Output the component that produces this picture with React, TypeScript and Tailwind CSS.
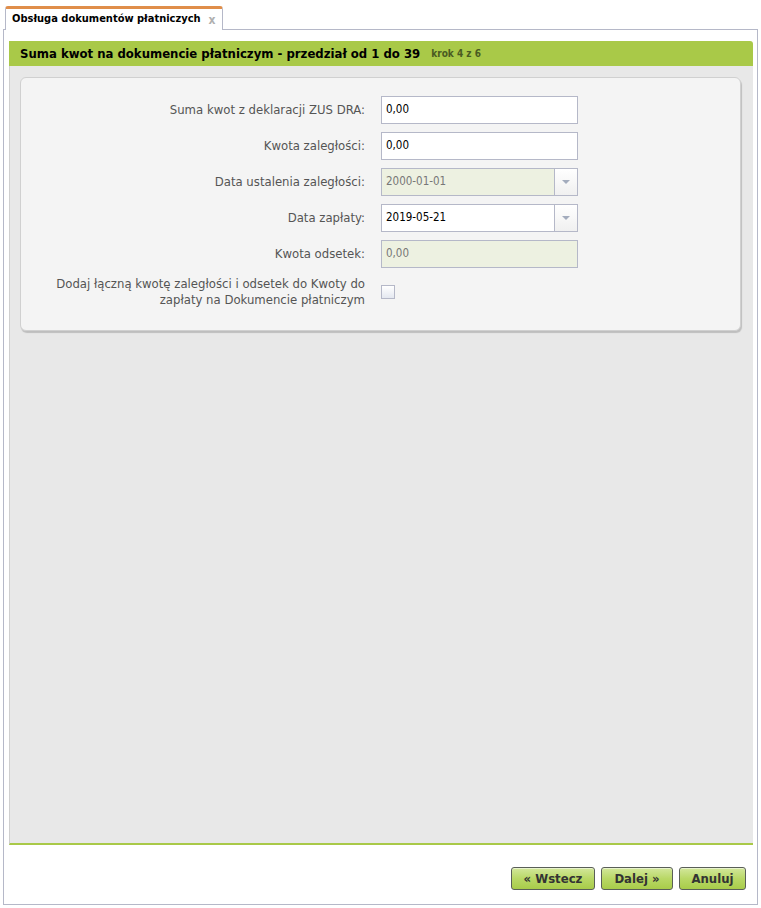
const font = { fontFamily: '"DejaVu Sans Condensed", "DejaVu Sans", sans-serif' };

interface FieldProps {
  label: string;
  value: string;
  disabled?: boolean;
  combo?: boolean;
}

function Field({ label, value, disabled, combo }: FieldProps) {
  return (
    <div className="flex items-center h-[28px]">
      <div className="w-[360px] pr-[16px] text-right text-[13px] text-[#555]">{label}</div>
      <div
        className={`flex w-[197px] h-[28px] border border-[#b5b8c8] ${disabled ? 'bg-[#edf1e1]' : 'bg-white'}`}
      >
        <div className={`flex-1 flex items-center pl-[4px] text-[11.5px] ${disabled ? 'text-[#777]' : 'text-black'}`}>
          {value}
        </div>
        {combo && (
          <div className="w-[23px] h-full border-l border-[#b5b8c8] bg-gradient-to-b from-white to-[#f0f0f0] flex items-center justify-center">
            <svg width="8" height="5" viewBox="0 0 8 5">
              <path d="M0 0h8L4 4z" fill="#a3acbd" />
            </svg>
          </div>
        )}
      </div>
    </div>
  );
}

function Button({ children, w }: { children: React.ReactNode; w: string }) {
  return (
    <button
      className={`${w} h-[23px] rounded-[3px] border border-[#5a5f58] bg-gradient-to-b from-[#d3e79a] via-[#b9d866] to-[#a8cc49] text-[13px] font-bold text-[#333] shadow-[inset_0_1px_0_rgba(255,255,255,0.5)]`}
      style={font}
    >
      {children}
    </button>
  );
}

export default function App() {
  return (
    <div className="w-[761px] h-[908px] bg-white" style={font}>
      {/* Zakładka */}
      <div className="flex pl-[5px] pt-[6px]">
        <div className="relative z-10 -mb-px h-[24px] w-[218px] border-x border-[#b5b8c8] border-t-[3px] border-t-[#e08e4a] bg-white rounded-t-[3px] flex items-center pl-[6px] gap-[8px] whitespace-nowrap">
          <span className="text-[11px] font-bold text-black">Obsługa dokumentów płatniczych</span>
          <span className="text-[12px] font-bold text-[#b0b0b0] leading-none">x</span>
        </div>
      </div>

      {/* Kontener */}
      <div className="mx-[3px] w-[755px] h-[876px] border border-[#b5b8c8] bg-white flex flex-col px-[5px] pt-[11px]">
        <div className="w-[744px] flex-none">
          <div className="h-[25px] bg-[#a9c948] rounded-tr-[3px] flex items-center pl-[11px] gap-[11px] whitespace-nowrap">
            <span className="text-[13px] font-bold text-black">
              Suma kwot na dokumencie płatniczym - przedział od 1 do 39
            </span>
            <span className="text-[10px] font-bold text-[#4a5a22]">krok 4 z 6</span>
          </div>
          <div className="h-[779px] bg-[#e8e8e8] border-l border-[#cfcfcf] border-b-[2px] border-b-[#a9c948] pl-[10px] pr-[12px] pt-[11px]">
            <div className="h-[254px] bg-[#f4f4f4] border border-[#d0d0d0] rounded-[6px] shadow-[1px_2px_1px_rgba(0,0,0,0.18)] pt-[18px] flex flex-col gap-[8px]">
              <Field label="Suma kwot z deklaracji ZUS DRA:" value="0,00" />
              <Field label="Kwota zaległości:" value="0,00" />
              <Field label="Data ustalenia zaległości:" value="2000-01-01" disabled combo />
              <Field label="Data zapłaty:" value="2019-05-21" combo />
              <Field label="Kwota odsetek:" value="0,00" disabled />
              <div className="flex items-center">
                <div className="w-[360px] pl-[28px] pr-[16px] text-right text-[13px] text-[#555] leading-[16px]">
                  Dodaj łączną kwotę zaległości i odsetek do Kwoty do zapłaty na Dokumencie płatniczym
                </div>
                <div className="w-[14px] h-[14px] border border-[#b5b8c8] bg-gradient-to-b from-white to-[#e4e8f0]" />
              </div>
            </div>
          </div>
        </div>

        <div className="flex justify-end gap-[6px] mt-[22px] pr-[6px]">
          <Button w="w-[84px]">« Wstecz</Button>
          <Button w="w-[72px]">Dalej »</Button>
          <Button w="w-[67px]">Anuluj</Button>
        </div>
      </div>
    </div>
  );
}
